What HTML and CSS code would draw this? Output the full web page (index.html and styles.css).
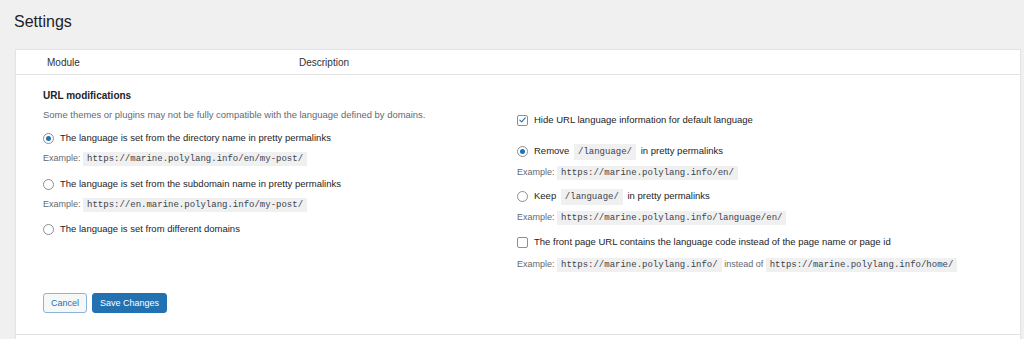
FILE: index.html
```html
<!DOCTYPE html>
<html lang="en">
<head>
    <meta charset="UTF-8">
    <title>Settings</title>
    <link rel="stylesheet" href="styles.css">
</head>
<body>
    <h1 class="page-title">Settings</h1>
    <div class="panel">
        <div class="panel-head">
            <span class="col-module">Module</span>
            <span class="col-desc">Description</span>
        </div>
        <div class="panel-row">
            <div class="settings-grid">
                <div class="col-left">
                    <h3 class="section-title">URL modifications</h3>
                    <p class="section-desc">Some themes or plugins may not be fully compatible with the language defined by domains.</p>
                    <label class="option opt-first">
                        <span class="radio checked"></span>
                        <span>The language is set from the directory name in pretty permalinks</span>
                    </label>
                    <div class="example">Example: <code>https://marine.polylang.info/en/my-post/</code></div>
                    <label class="option opt-second">
                        <span class="radio"></span>
                        <span>The language is set from the subdomain name in pretty permalinks</span>
                    </label>
                    <div class="example">Example: <code>https://en.marine.polylang.info/my-post/</code></div>
                    <label class="option opt-third">
                        <span class="radio"></span>
                        <span>The language is set from different domains</span>
                    </label>
                </div>
                <div class="col-right">
                    <label class="option">
                        <span class="checkbox checked">
                            <svg viewBox="0 0 12 12" width="10" height="10"><path d="M2.4 6.2 L4.9 8.6 L9.6 3.2" fill="none" stroke="#2271b1" stroke-width="1.5" stroke-linecap="round" stroke-linejoin="round"/></svg>
                        </span>
                        <span>Hide URL language information for default language</span>
                    </label>
                    <label class="option opt-remove">
                        <span class="radio checked"></span>
                        <span>Remove <code>/language/</code> in pretty permalinks</span>
                    </label>
                    <div class="example">Example: <code>https://marine.polylang.info/en/</code></div>
                    <label class="option opt-keep">
                        <span class="radio"></span>
                        <span>Keep <code>/language/</code> in pretty permalinks</span>
                    </label>
                    <div class="example">Example: <code>https://marine.polylang.info/language/en/</code></div>
                    <label class="option opt-front">
                        <span class="checkbox"></span>
                        <span>The front page URL contains the language code instead of the page name or page id</span>
                    </label>
                    <div class="example ex-front">Example: <code>https://marine.polylang.info/</code> instead of <code>https://marine.polylang.info/home/</code></div>
                </div>
            </div>
            <div class="actions">
                <button class="btn btn-secondary">Cancel</button>
                <button class="btn btn-primary">Save Changes</button>
            </div>
        </div>
        <div class="panel-row next-row"></div>
    </div>
</body>
</html>
```

FILE: styles.css
```css
body {
    margin: 0;
    background-color: #f0f0f1;
    color: #1d2327;
    font-family: 'Liberation Sans', Arial, sans-serif;
    overflow: hidden;
}
.page-title {
    margin: 0;
    padding: 12px 0 0 14px;
    height: 37px;
    box-sizing: border-box;
    font-size: 16px;
    font-weight: 400;
    line-height: 20px;
}
.panel {
    margin: 12px 3px 0 15px;
    background: #fff;
    border: 1px solid #e3e3e5;
    border-bottom: none;
    box-shadow: 0 1px 1px rgba(0, 0, 0, 0.04);
}
.panel-head {
    display: flex;
    height: 24px;
    align-items: center;
    border-bottom: 1px solid #e3e3e5;
    font-size: 10px;
    color: #2c3338;
}
.col-module {
    width: 252px;
    padding-left: 31px;
}
.panel-row {
    padding: 14px 27px 21px;
}
.settings-grid {
    display: grid;
    grid-template-columns: 474px 1fr;
}
.section-title {
    margin: 0;
    font-size: 10px;
    font-weight: 700;
    line-height: 14px;
}
.section-desc {
    margin: 5px 0 0;
    font-size: 9.45px;
    line-height: 14px;
    color: #646970;
}
.option {
    display: flex;
    align-items: center;
    gap: 6px;
    font-size: 9.5px;
    line-height: 16px;
    color: #1d2327;
}
.opt-first {
    margin-top: 8px;
}
.opt-second {
    margin-top: 9px;
}
.opt-third {
    margin-top: 8px;
}
.col-right {
    padding-top: 23px;
}
.opt-remove {
    margin-top: 15px;
}
.opt-keep {
    margin-top: 7px;
}
.opt-front {
    margin-top: 8px;
}
.option code {
    margin: 0 2px;
    padding: 3px 4px;
}
.radio,
.checkbox {
    flex: none;
    width: 11px;
    height: 11px;
    box-sizing: border-box;
    border: 1px solid #8c8f94;
    background: #fff;
    display: flex;
    align-items: center;
    justify-content: center;
}
.radio {
    border-radius: 50%;
}
.radio.checked::after {
    content: '';
    width: 5px;
    height: 5px;
    border-radius: 50%;
    background: #2271b1;
}
.checkbox {
    border-radius: 2px;
}
.example {
    margin-top: 4px;
    font-size: 9px;
    line-height: 16px;
    color: #646970;
}
.ex-front {
    margin-top: 6px;
}
code {
    font-family: 'Liberation Mono', 'DejaVu Sans Mono', monospace;
    font-size: 9px;
    background: #f0f0f1;
    color: #3c434a;
    padding: 2px 4px;
}
.actions {
    display: flex;
    gap: 5px;
    margin-top: 20px;
}
.btn {
    height: 20px;
    padding: 0 7px;
    font-family: inherit;
    font-size: 9px;
    border-radius: 3px;
    cursor: pointer;
}
.btn-secondary {
    background: #f6f7f7;
    color: #2271b1;
    border: 1px solid #8cb3d8;
}
.btn-primary {
    background: #2271b1;
    color: #fff;
    border: 1px solid #2271b1;
}
.next-row {
    border-top: 1px solid #e3e3e5;
    height: 4px;
    padding: 0;
}
```
